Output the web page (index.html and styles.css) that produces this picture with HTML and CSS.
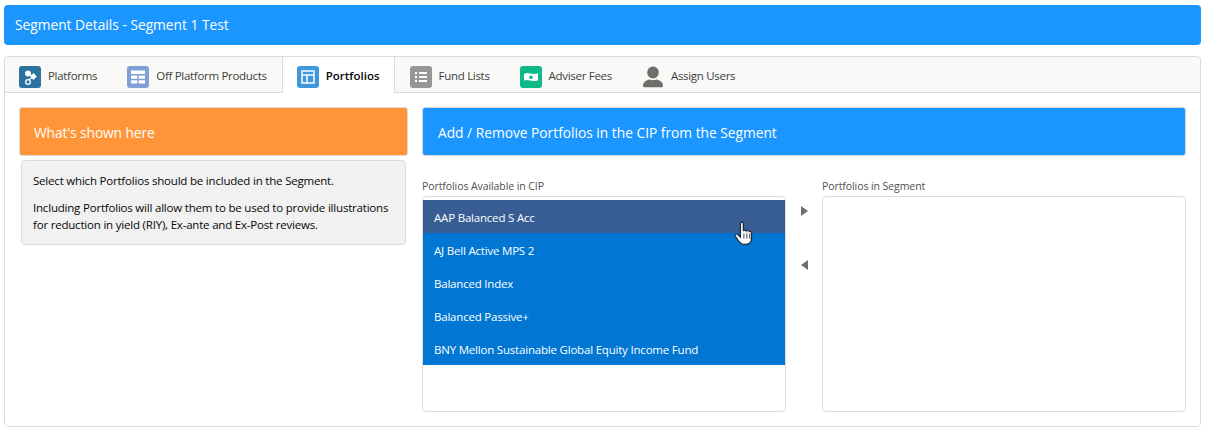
FILE: index.html
```html
<!DOCTYPE html>
<html>

<head>
    <meta charset="UTF-8">
    <title>Segment Details</title>
    <link rel="stylesheet" href="styles.css">
</head>

<body>

<div class="page-header">Segment Details - Segment 1 Test</div>

<div class="tabset">
    <div class="tabs">
        <a class="tab">
            <span class="tab-icon icon-platforms">
                <svg viewBox="0 0 22 22" width="22" height="22"><circle cx="9" cy="16" r="2.300" fill="none" stroke="#fff" stroke-width="1.300"/><path d="M10 14l4-3.500M9 7.500l5 3" stroke="#fff" stroke-width="1.200"/><circle cx="9" cy="7.500" r="3" fill="#fff"/><path d="M14.500 7l3.300 3.500-3.300 3.500-3.300-3.500z" fill="#fff"/></svg>
            </span>
            Platforms
        </a>
        <a class="tab">
            <span class="tab-icon icon-products">
                <svg viewBox="0 0 22 22" width="22" height="22"><path d="M4 4.500h14v3.500H4zM4 9.500h6.300v3.300H4zM11.700 9.500H18v3.300h-6.300zM4 14.200h6.300v3.300H4zM11.700 14.200H18v3.300h-6.300z" fill="#fff"/></svg>
            </span>
            Off Platform Products
        </a>
        <a class="tab active">
            <span class="tab-icon icon-portfolios">
                <svg viewBox="0 0 22 22" width="22" height="22"><path d="M5 5h12v12H5zM5 9h12M10 9v8" fill="none" stroke="#fff" stroke-width="1.500"/></svg>
            </span>
            Portfolios
        </a>
        <a class="tab">
            <span class="tab-icon icon-lists">
                <svg viewBox="0 0 22 22" width="22" height="22"><path d="M9 6h8v2H9zM9 10h8v2H9zM9 14h8v2H9z" fill="#fff"/><circle cx="6" cy="7" r="1.200" fill="#fff"/><circle cx="6" cy="11" r="1.200" fill="#fff"/><circle cx="6" cy="15" r="1.200" fill="#fff"/></svg>
            </span>
            Fund Lists
        </a>
        <a class="tab">
            <span class="tab-icon icon-fees">
                <svg viewBox="0 0 22 22" width="22" height="22"><path d="M4 8l3-1 3 .6 4 .4 4-.6v7l-4 .6-4-.4-3-.6-3 .6z" fill="#fff"/><circle cx="11" cy="11.300" r="1.800" fill="#0eb98a"/></svg>
            </span>
            Adviser Fees
        </a>
        <a class="tab">
            <span class="tab-icon icon-users">
                <svg viewBox="0 0 22 22" width="22" height="22"><ellipse cx="11" cy="6.500" rx="5.800" ry="6" fill="#6f6e6b"/><path d="M1 19.500c0-3.500 3.500-5.500 6.500-6 2 1 5 1 7 0 3 .5 6.500 2.500 6.500 6 0 1-.8 1.800-1.500 1.800h-17c-.7 0-1.500-.8-1.500-1.800z" fill="#6f6e6b"/></svg>
            </span>
            Assign Users
        </a>
    </div>

    <div class="tab-body">
        <div class="side">
            <div class="panel-title orange">What's shown here</div>
            <div class="help">
                <p>Select which Portfolios should be included in the Segment.</p>
                <p>Including Portfolios will allow them to be used to provide illustrations for reduction in yield (RIY), Ex-ante and Ex-Post reviews.</p>
            </div>
        </div>

        <div class="main">
            <div class="panel-title blue">Add / Remove Portfolios in the CIP from the Segment</div>
            <div class="picker">
                <div class="picker-col">
                    <div class="picker-label">Portfolios Available in CIP</div>
                    <div class="listbox">
                        <div class="option hover">AAP Balanced S Acc</div>
                        <div class="option">AJ Bell Active MPS 2</div>
                        <div class="option">Balanced Index</div>
                        <div class="option">Balanced Passive+</div>
                        <div class="option">BNY Mellon Sustainable Global Equity Income Fund</div>
                        <svg class="cursor" viewBox="0 0 18 25" width="21" height="26" preserveAspectRatio="none"><path d="M5.500 2.500c0-1.800 2.500-1.800 2.500 0v7c.5-1 2.300-1 2.500.2.500-.9 2.200-.8 2.400.4.600-.7 2.100-.4 2.100 1v5.400c0 3.500-2 6-5.500 6-3 0-4.500-1.500-6-4L1 14.500c-.8-1.500 1-2.700 2.200-1.500l2.300 2.500z" fill="#fff" stroke="#1d2a3a" stroke-width="1.100"/><path d="M8.500 12v5M11 12v5M13.500 12v5" stroke="#1d2a3a" stroke-width=".8"/></svg>
                    </div>
                </div>
                <div class="arrows">
                    <span class="arrow-right"></span>
                    <span class="arrow-left"></span>
                </div>
                <div class="picker-col">
                    <div class="picker-label">Portfolios in Segment</div>
                    <div class="listbox"></div>
                </div>
            </div>
        </div>
    </div>
</div>

</body>

</html>
```

FILE: styles.css
```css
* {
    margin: 0;
    padding: 0;
    box-sizing: border-box;
}
body {
    padding: 5px 4px 0 4px;
    font-family: "Open Sans", "Noto Sans", sans-serif;
    font-size: 11.500px;
    letter-spacing: -0.2px;
    color: #16325c;
    background: #fff;
}
.page-header {
    height: 40px;
    line-height: 40px;
    padding-left: 11px;
    font-size: 13.750px;
    letter-spacing: 0;
    color: #fff;
    background: #1b96ff;
    border-radius: 4px;
}
.tabset {
    margin-top: 11px;
    height: 371px;
    border: 1px solid #dddbda;
    border-radius: 4px;
    display: flex;
    flex-direction: column;
}
.tabs {
    display: flex;
    height: 36px;
    background: #f9f9f7;
    border-bottom: 1px solid #dddbda;
    border-radius: 4px 4px 0 0;
}
.tab {
    display: flex;
    align-items: center;
    gap: 7px;
    height: 36px;
    padding: 1px 14px 0 14px;
    border-left: 1px solid transparent;
    border-right: 1px solid transparent;
    letter-spacing: -0.3px;
    color: #3e3e3c;
    white-space: nowrap;
}
.tab:first-child {
    margin-left: -1px;
}
.tab.active {
    font-weight: 600;
    letter-spacing: 0;
    color: #080707;
    background: #fff;
    border-left-color: #dddbda;
    border-right-color: #dddbda;
}
.tab-icon {
    width: 22px;
    height: 22px;
    margin-top: 3px;
    border-radius: 3px;
    display: block;
}
.tab-icon svg {
    display: block;
}
.icon-platforms { background: #2a739e; }
.icon-products { background: #7f9fd6; }
.icon-portfolios { background: #3c97dd; }
.icon-lists { background: #979694; }
.icon-fees { background: #0eb98a; }
.tab-body {
    flex: 1;
    display: flex;
    gap: 14px;
    padding: 14px;
}
.side {
    width: 389px;
}
.main {
    flex: 1;
}
.panel-title {
    height: 49px;
    line-height: 49px;
    padding-left: 15px;
    font-size: 13.750px;
    letter-spacing: 0;
    color: #fff;
    border-radius: 3px;
    border: 1px solid #dddbda;
}
.orange {
    padding-left: 14px;
    letter-spacing: -0.1px;
    background: #ff9538;
}
.blue {
    background: #1b96ff;
}
.help {
    margin: 4px 2px 0 2px;
    height: 85px;
    padding: 11px 11px 0 11px;
    line-height: 17px;
    color: #080707;
    background: #f1f1f1;
    border: 1px solid #dddbda;
    border-radius: 4px;
}
.help p + p {
    margin-top: 10px;
}
.picker {
    display: flex;
    margin-top: 22px;
}
.picker-col {
    width: 364px;
}
.picker-label {
    height: 18px;
    line-height: 16px;
    font-size: 10.500px;
    letter-spacing: -0.08px;
    color: #514f4d;
}
.listbox {
    position: relative;
    height: 216px;
    padding-top: 3px;
    background: #fff;
    border: 1px solid #dddbda;
    border-radius: 4px;
}
.option {
    height: 33px;
    line-height: 35px;
    padding-left: 11px;
    color: #fff;
    background: #0176d3;
}
.option.hover {
    background: #375d94;
}
.cursor {
    position: absolute;
    left: 311px;
    top: 24px;
}
.arrows {
    width: 36px;
    display: flex;
    flex-direction: column;
    align-items: center;
    gap: 44px;
    padding-top: 28px;
}
.arrow-right {
    width: 0;
    height: 0;
    border-top: 5px solid transparent;
    border-bottom: 5px solid transparent;
    border-left: 7px solid #706e6b;
}
.arrow-left {
    width: 0;
    height: 0;
    border-top: 5px solid transparent;
    border-bottom: 5px solid transparent;
    border-right: 7px solid #706e6b;
}
```
